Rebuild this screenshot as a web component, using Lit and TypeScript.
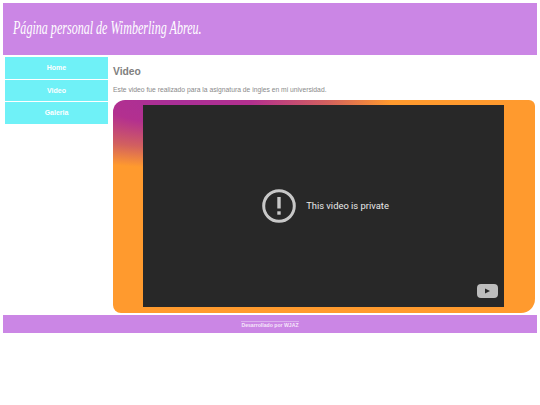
import { LitElement, html, css } from "lit";
import { customElement } from "lit/decorators.js";

@customElement("app-root")
export class AppRoot extends LitElement {
  static styles = css`
    :host { display: block; width: 540px; height: 405px; font-family: "Liberation Sans", Arial, sans-serif; background: #fff; overflow: hidden; }
    .page { padding: 3px 3px 0; display: flex; flex-direction: column; }
    .header { height: 52px; background: #cb86e5; display: flex; align-items: center; padding: 0 0 0 10px; box-sizing: border-box; }
    .title { margin: 0; color: #fff; font: italic 400 18.5px/1 "Liberation Serif", cursive; transform: scaleX(0.652); transform-origin: left center; white-space: nowrap; position: relative; top: -1px; }
    .body { display: flex; padding: 2px 2px 0; height: 258px; box-sizing: border-box; }
    .side { width: 103px; flex: none; display: flex; flex-direction: column; gap: 1px; }
    .side a { height: 21.5px; background: #6ff1f7; color: #fff; font-size: 7px; font-weight: 700; display: flex; align-items: center; justify-content: center; text-decoration: none; }
    .main { margin-left: 5px; width: 422px; color: #888; }
    .main h2 { margin: 8px 0 0; font-size: 10.3px; line-height: 13px; font-weight: 700; color: #808080; }
    .main p { margin: 7px 0 0; font-size: 6.75px; line-height: 9px; color: #8a8a8a; }
    .video { margin-top: 6px; height: 213px; border-radius: 12px 6px 14px 8px; background: radial-gradient(ellipse 215px 68px at 15% 0, #a92f98 0%, #b3308f 35%, #d2605f 70%, #ff9a2e 100%), #ff9a2e; padding: 5px 31px 6px 30px; box-sizing: border-box; }
    .player { height: 202px; background: #282828; position: relative; display: flex; align-items: center; justify-content: center; gap: 10px; padding-left: 4px; box-sizing: border-box; }
    .player span { color: #eaeaea; font: 400 9.4px/1 Roboto, sans-serif; }
    .alert { width: 34px; height: 34px; display: block; }
    .yt { position: absolute; right: 6px; bottom: 9px; width: 21px; height: 14px; }
    .footer { margin-top: 2px; height: 18px; background: #cb86e5; color: #f6e6fb; font-size: 5.15px; font-weight: 700; display: flex; align-items: center; justify-content: center; }
    .footer b { border-top: 1px solid #dcb0ee; line-height: 6px; }
  `;
  render() {
    return html`<div class="page">
      <header class="header"><h1 class="title">Página personal de Wimberling Abreu.</h1></header>
      <div class="body">
        <nav class="side"><a>Home</a><a>Video</a><a>Galeria</a></nav>
        <main class="main">
          <h2>Video</h2>
          <p>Este video fue realizado para la asignatura de ingles en mi universidad.</p>
          <div class="video"><div class="player">
            <svg class="alert" viewBox="0 0 34 34"><circle cx="17" cy="17" r="15.3" fill="none" stroke="#c8c8c8" stroke-width="3"/><rect x="15.3" y="8" width="3.4" height="11.5" fill="#c8c8c8"/><rect x="15.3" y="22.3" width="3.4" height="3.4" fill="#c8c8c8"/></svg>
            <span>This video is private</span>
            <svg class="yt" viewBox="0 0 21 14"><rect width="21" height="14" rx="4" fill="#bdbdbd"/><path d="M8 4.5v5l5-2.5z" fill="#282828"/></svg>
          </div></div>
        </main>
      </div>
      <footer class="footer"><b>Desarrollado por WJAZ</b></footer>
    </div>`;
  }
}
